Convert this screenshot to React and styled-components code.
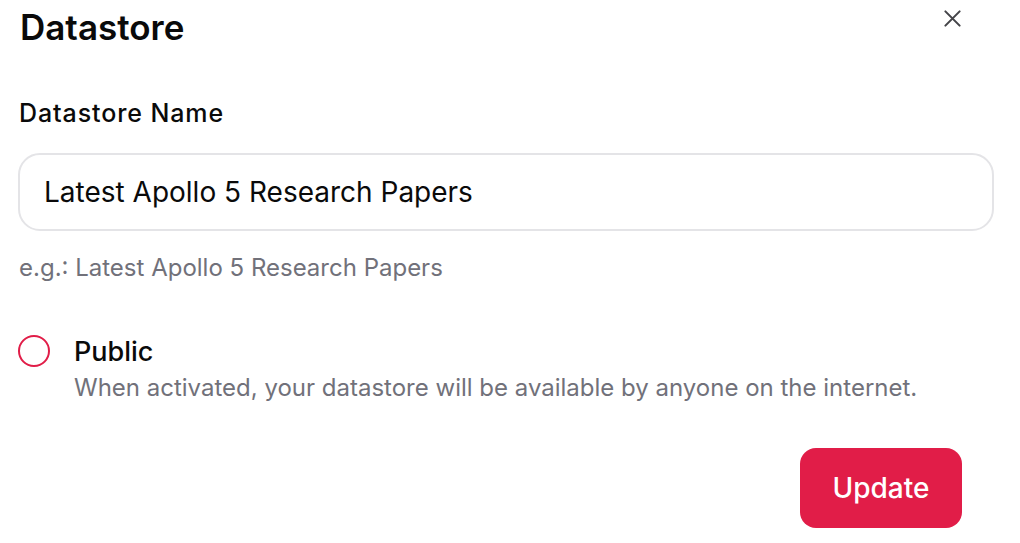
import React from 'react'
import styled, { createGlobalStyle } from 'styled-components';

const GlobalStyle = createGlobalStyle`
  html, body {
    margin: 0;
    padding: 0;
    background: #fff;
    font-family: Inter, "Noto Sans", sans-serif;
  }
`;

const App = () => {

    return (
        <>
            <GlobalStyle/>
            <Modal>
                <Header>
                    <Title>Datastore</Title>
                    <CloseButton aria-label="Close">
                        <svg width="24" height="24" viewBox="0 0 24 24" fill="none" stroke="currentColor"
                             strokeWidth="2.6" strokeLinecap="round">
                            <path d="M3 3l18 18M21 3L3 21"/>
                        </svg>
                    </CloseButton>
                </Header>

                <Field>
                    <Label htmlFor="name">Datastore Name</Label>
                    <Input id="name" defaultValue="Latest Apollo 5 Research Papers"/>
                    <Hint>e.g.: Latest Apollo 5 Research Papers</Hint>
                </Field>

                <Toggle>
                    <Radio/>
                    <ToggleText>
                        <ToggleTitle>Public</ToggleTitle>
                        <ToggleDesc>When activated, your datastore will be available by anyone on the internet.</ToggleDesc>
                    </ToggleText>
                </Toggle>

                <Footer>
                    <Button>Update</Button>
                </Footer>
            </Modal>
        </>
    )
}

const Modal = styled.div`
  width: 976px;
  padding: 5px 26px 14px 18px;
  box-sizing: content-box;
`;

const Header = styled.div`
  display: flex;
  justify-content: space-between;
  align-items: flex-start;
`;

const Title = styled.h1`
  margin: 0 0 0 2px;
  font-size: 35px;
  line-height: 44px;
  font-weight: 600;
  color: #0a0a0a;
`;

const CloseButton = styled.button`
  display: flex;
  align-items: center;
  justify-content: center;
  width: 40px;
  height: 40px;
  margin: -7px 22px 0 0;
  padding: 0;
  border: none;
  background: none;
  color: #444448;
  cursor: pointer;

  svg {
    width: 19px;
    height: 19px;
  }
`;

const Field = styled.div`
  display: flex;
  flex-direction: column;
  margin-top: 48px;
`;

const Label = styled.label`
  margin-left: 1px;
  font-size: 25px;
  line-height: 32px;
  font-weight: 500;
  letter-spacing: 0.9px;
  color: #0a0a0a;
`;

const Input = styled.input`
  margin-top: 24px;
  height: 78px;
  box-sizing: border-box;
  padding: 0 24px;
  border: 2px solid #e4e4e7;
  border-radius: 22px;
  font-family: inherit;
  font-size: 28px;
  color: #0a0a0a;
  outline: none;
`;

const Hint = styled.p`
  margin: 21px 0 0 1px;
  font-size: 24px;
  line-height: 32px;
  color: #71717a;
`;

const Toggle = styled.div`
  display: flex;
  align-items: flex-start;
  gap: 24px;
  margin-top: 51px;
`;

const Radio = styled.span`
  flex: none;
  width: 32px;
  height: 32px;
  box-sizing: border-box;
  border: 2px solid #e11d48;
  border-radius: 50%;
`;

const ToggleText = styled.div`
  display: flex;
  flex-direction: column;
  gap: 3px;
`;

const ToggleTitle = styled.span`
  font-size: 27px;
  line-height: 34px;
  font-weight: 500;
  color: #0a0a0a;
`;

const ToggleDesc = styled.span`
  font-size: 24px;
  line-height: 32px;
  color: #71717a;
`;

const Footer = styled.div`
  display: flex;
  justify-content: flex-end;
  margin-top: 44px;
  padding-right: 32px;
`;

const Button = styled.button`
  width: 162px;
  height: 80px;
  border: none;
  border-radius: 16px;
  background: #e11d48;
  color: #fff;
  font-family: inherit;
  font-size: 28px;
  font-weight: 500;
  cursor: pointer;
`;

export default App;
